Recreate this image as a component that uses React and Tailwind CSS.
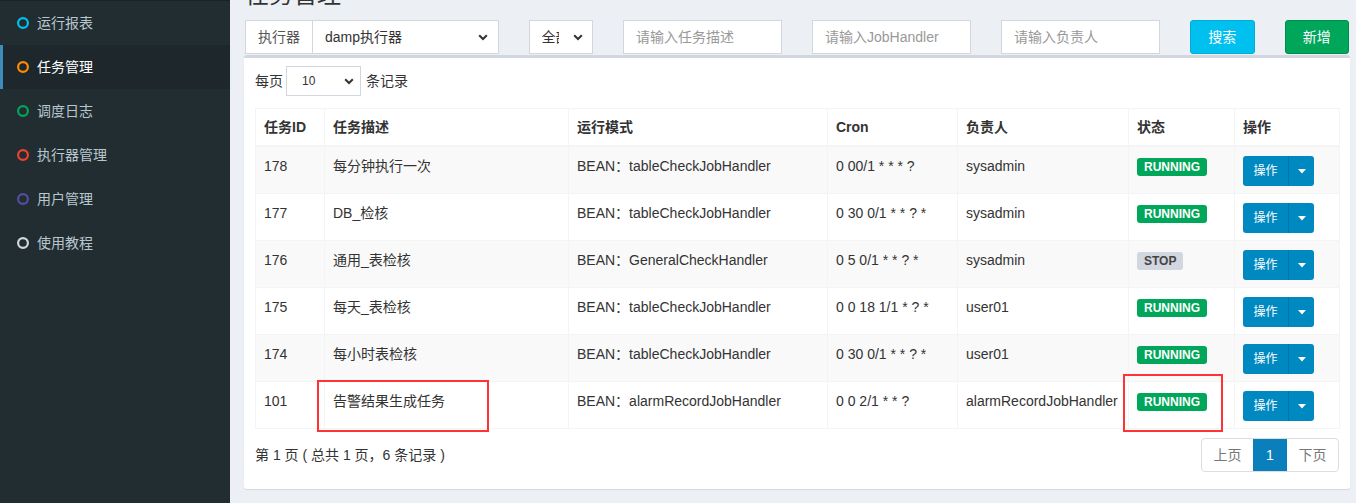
import React from "react";

const FONT = { fontFamily: '"Liberation Sans", "Noto Sans CJK SC", sans-serif' };

function Circle({ color }) {
  return (
    <svg width="12" height="12" viewBox="0 0 12 12" className="shrink-0">
      <circle cx="6" cy="6" r="4.9" fill="none" stroke={color} strokeWidth="2.2" />
    </svg>
  );
}

function Chevron() {
  return (
    <svg width="10" height="7" viewBox="0 0 10 7" className="shrink-0">
      <path d="M1.2 1.3 L5 5 L8.8 1.3" fill="none" stroke="#333" strokeWidth="2" />
    </svg>
  );
}

const menu = [
  { label: "运行报表", color: "#00c0ef" },
  { label: "任务管理", color: "#ff8c00", active: true },
  { label: "调度日志", color: "#00a65a" },
  { label: "执行器管理", color: "#f0412f" },
  { label: "用户管理", color: "#534f9e" },
  { label: "使用教程", color: "#d2d6de" },
];

const rows = [
  { id: "178", desc: "每分钟执行一次", mode: "BEAN：tableCheckJobHandler", cron: "0 00/1 * * * ?", owner: "sysadmin", status: "RUNNING" },
  { id: "177", desc: "DB_检核", mode: "BEAN：tableCheckJobHandler", cron: "0 30 0/1 * * ? *", owner: "sysadmin", status: "RUNNING" },
  { id: "176", desc: "通用_表检核", mode: "BEAN：GeneralCheckHandler", cron: "0 5 0/1 * * ? *", owner: "sysadmin", status: "STOP" },
  { id: "175", desc: "每天_表检核", mode: "BEAN：tableCheckJobHandler", cron: "0 0 18 1/1 * ? *", owner: "user01", status: "RUNNING" },
  { id: "174", desc: "每小时表检核", mode: "BEAN：tableCheckJobHandler", cron: "0 30 0/1 * * ? *", owner: "user01", status: "RUNNING" },
  { id: "101", desc: "告警结果生成任务", mode: "BEAN：alarmRecordJobHandler", cron: "0 0 2/1 * * ?", owner: "alarmRecordJobHandler", status: "RUNNING" },
];

export default function App() {
  return (
    <div className="flex w-[1356px] h-[503px] overflow-hidden" style={FONT}>
      <aside className="w-[230px] shrink-0 bg-[#222d32]">
        <div className="h-[1px] bg-[#1a2226]" />
        {menu.map((m) => (
          <div
            key={m.label}
            className={
              m.active
                ? "flex items-center gap-[8px] h-[44px] pl-[14px] border-l-[3px] border-[#3c8dbc] bg-[#1e282c] text-white text-[14px]"
                : "flex items-center gap-[8px] h-[44px] pl-[17px] text-[#b8c7ce] text-[14px]"
            }
          >
            <Circle color={m.color} />
            <span className="leading-[20px]">{m.label}</span>
          </div>
        ))}
      </aside>

      <main className="relative w-[1126px] shrink-0 bg-[#ecf0f5] pl-[15px] text-[#333]">
        <h1 className="text-[24px] leading-[26px] -mt-[18px] mb-[12px] font-normal">任务管理</h1>

        {/* filter row */}
        <div className="grid grid-cols-12 gap-x-[30px] w-[1104px] h-[34px] text-[14px]">
          <div className="col-span-3 flex h-[34px]">
            <div className="flex items-center px-[12px] border border-[#d2d6de] bg-white text-[#555] whitespace-nowrap">执行器</div>
            <div className="flex-1 flex items-center justify-between pl-[12px] pr-[10px] border border-l-0 border-[#d2d6de] bg-white text-[#333]">
              <span>damp执行器</span>
              <Chevron />
            </div>
          </div>
          <div className="col-span-1 flex items-center justify-between h-[34px] pl-[12px] pr-[9px] border border-[#d2d6de] bg-white">
            <span className="w-[17px] overflow-hidden whitespace-nowrap">全部</span>
            <Chevron />
          </div>
          <div className="col-span-2 flex items-center h-[34px] px-[12px] border border-[#d2d6de] bg-white text-[#999]">请输入任务描述</div>
          <div className="col-span-2 flex items-center h-[34px] px-[12px] border border-[#d2d6de] bg-white text-[#999]">请输入JobHandler</div>
          <div className="col-span-2 flex items-center h-[34px] px-[12px] border border-[#d2d6de] bg-white text-[#999]">请输入负责人</div>
          <div className="col-span-1 flex items-center justify-center h-[34px] rounded-[3px] border border-[#00acd6] bg-[#00c0ef] text-white">搜索</div>
          <div className="col-span-1 flex items-center justify-center h-[34px] rounded-[3px] border border-[#008d4c] bg-[#00a65a] text-white">新增</div>
        </div>

        {/* box */}
        <div className="mt-[1px] -ml-[1px] w-[1106px] bg-white border-t-[3px] border-[#d2d6de] rounded-[3px] shadow-[0_1px_1px_rgba(0,0,0,0.1)] px-[11px] pt-[8px] pb-[17px]">
          <div className="flex items-center h-[30px] mb-[12px] text-[14px]">
            <span>每页</span>
            <div className="ml-[3px] flex items-center justify-between w-[75px] h-[30px] pl-[15px] pr-[6px] border border-[#d2d6de] text-[12px]">
              <span>10</span>
              <Chevron />
            </div>
            <span className="ml-[5px]">条记录</span>
          </div>

          <table className="w-[1084px] table-fixed border-collapse text-[14px] leading-[20px]">
            <colgroup>
              <col className="w-[69px]" />
              <col className="w-[244px]" />
              <col className="w-[259px]" />
              <col className="w-[130px]" />
              <col className="w-[171px]" />
              <col className="w-[106px]" />
              <col className="w-[105px]" />
            </colgroup>
            <thead>
              <tr>
                {["任务ID", "任务描述", "运行模式", "Cron", "负责人", "状态", "操作"].map((h) => (
                  <th key={h} className="text-left font-bold p-[8px] border border-[#f4f4f4] border-b-2 whitespace-nowrap">
                    {h}
                  </th>
                ))}
              </tr>
            </thead>
            <tbody>
              {rows.map((r, i) => (
                <tr key={r.id} className={i % 2 === 0 ? "bg-[#f9f9f9]" : "bg-white"}>
                  <td className="align-top px-[8px] pt-[9px] pb-[7px] border border-[#f4f4f4]">{r.id}</td>
                  <td className="align-top px-[8px] pt-[9px] pb-[7px] border border-[#f4f4f4]">{r.desc}</td>
                  <td className="align-top px-[8px] pt-[9px] pb-[7px] border border-[#f4f4f4] whitespace-nowrap">{r.mode}</td>
                  <td className="align-top px-[8px] pt-[9px] pb-[7px] border border-[#f4f4f4] whitespace-nowrap">{r.cron}</td>
                  <td className="align-top px-[8px] pt-[9px] pb-[7px] border border-[#f4f4f4] whitespace-nowrap">{r.owner}</td>
                  <td className="align-top px-[8px] pt-[9px] pb-[7px] border border-[#f4f4f4]">
                    {r.status === "RUNNING" ? (
                      <span className="inline-block mt-[2px] px-[7px] pt-[3px] pb-[3px] rounded-[3px] bg-[#00a65a] text-white text-[12px] leading-[12px] font-bold align-top">RUNNING</span>
                    ) : (
                      <span className="inline-block mt-[2px] px-[7px] pt-[3px] pb-[3px] rounded-[3px] bg-[#d2d6de] text-[#444] text-[12px] leading-[12px] font-bold align-top">STOP</span>
                    )}
                  </td>
                  <td className="align-top px-[8px] pt-[9px] pb-[7px] border border-[#f4f4f4]">
                    <div className="flex h-[30px] w-[71px] rounded-[3px] overflow-hidden bg-[#0089c0] text-white text-[12px]">
                      <div className="flex items-center justify-center w-[46px] border-r border-[#0076a8]">操作</div>
                      <div className="flex items-center justify-center flex-1">
                        <svg width="8" height="5" viewBox="0 0 8 5">
                          <path d="M0 0 L8 0 L4 4.5 Z" fill="#fff" />
                        </svg>
                      </div>
                    </div>
                  </td>
                </tr>
              ))}
            </tbody>
          </table>

          <div className="flex items-center justify-between h-[34px] mt-[9px] text-[14px]">
            <span>第 1 页 ( 总共 1 页，6 条记录 )</span>
            <div className="flex h-[34px] border border-[#ddd] rounded-[4px] overflow-hidden text-[#777]">
              <div className="flex items-center justify-center w-[51px]">上页</div>
              <div className="flex items-center justify-center w-[34px] bg-[#0a7fbb] text-white">1</div>
              <div className="flex items-center justify-center w-[51px]">下页</div>
            </div>
          </div>
        </div>

        {/* annotation overlays */}
        <div className="absolute left-[87px] top-[380px] w-[172px] h-[52px] border-2 border-[#f33]" />
        <div className="absolute left-[893px] top-[374px] w-[100px] h-[58px] border-2 border-[#f33]" />
      </main>
    </div>
  );
}
